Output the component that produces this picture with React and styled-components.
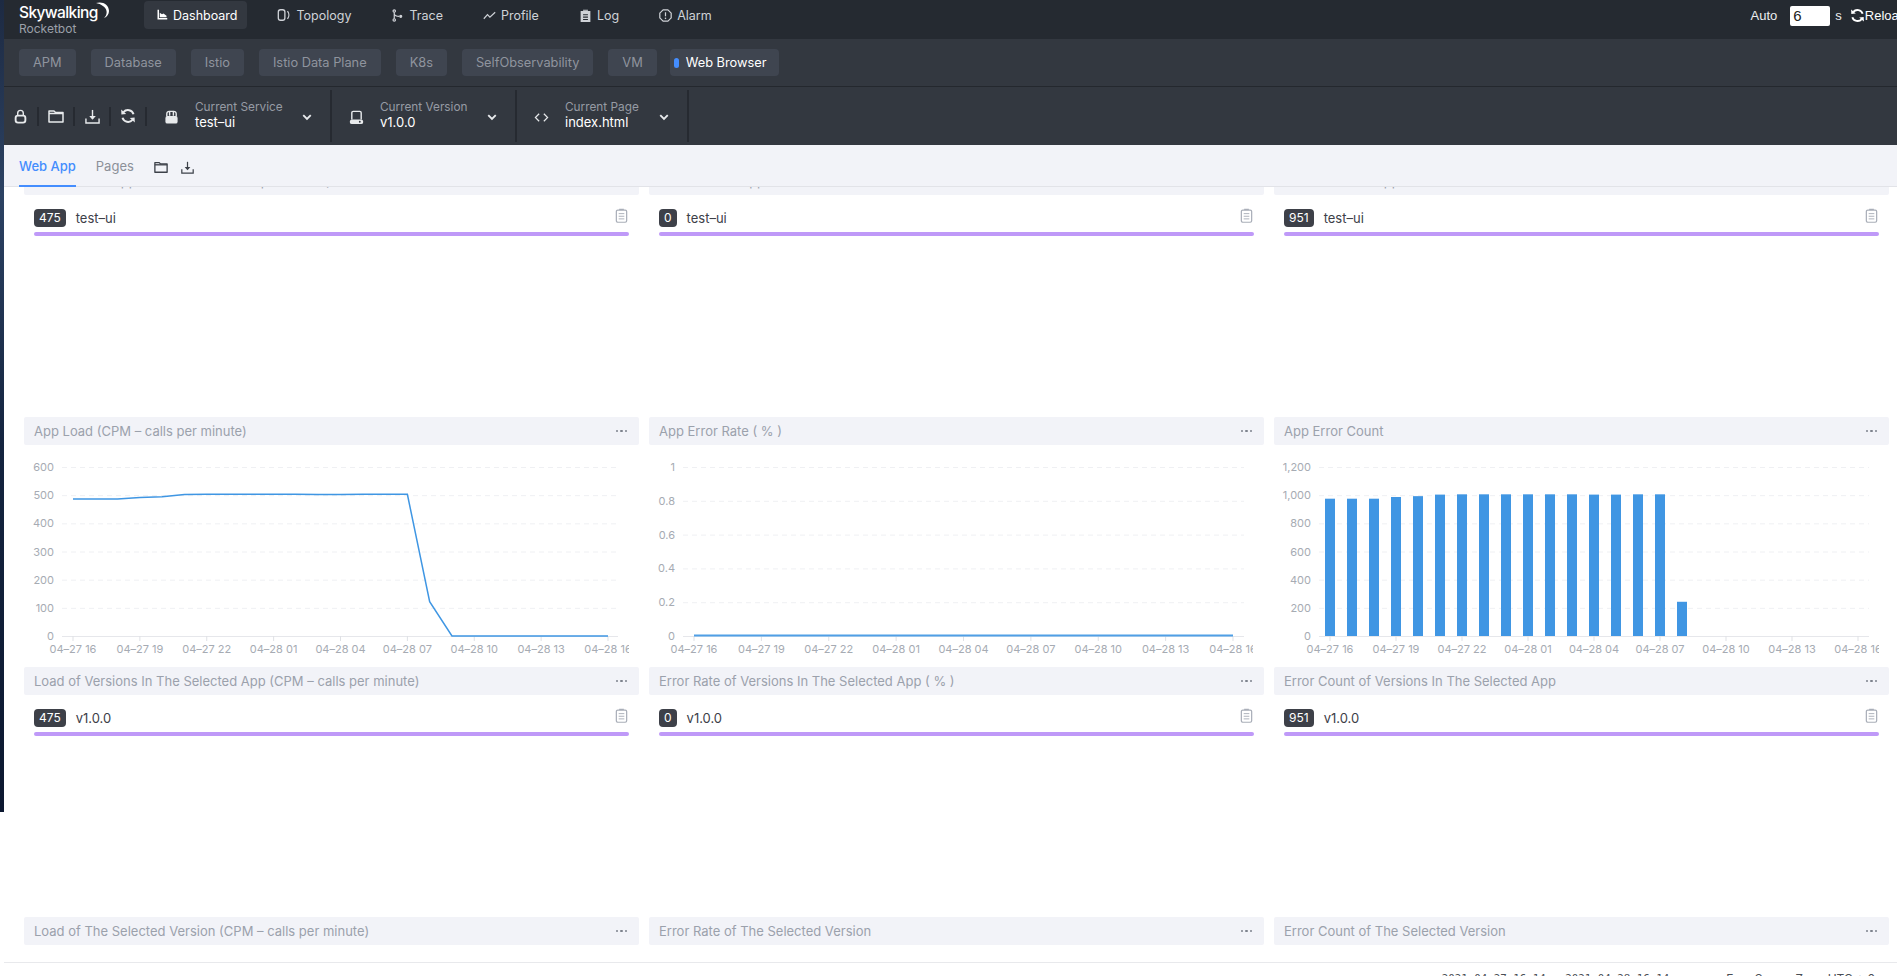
import React from "react";
import styled, { createGlobalStyle } from "styled-components";

const FONT = `Inter, "Noto Sans CJK SC", sans-serif`;

const GlobalStyle = createGlobalStyle`
  html, body {
    margin: 0;
    padding: 0;
    background: #fff;
    overflow: hidden;
  }
  body {
    font-family: ${FONT};
    font-size: 13px;
  }
  * {
    box-sizing: border-box;
  }
`;

const Ico = ({ children, size = 14, vb = "0 0 16 16" }) => (
  <svg width={size} height={size} viewBox={vb} fill="none" stroke="currentColor" strokeWidth="1.5">
    {children}
  </svg>
);

const DashIcon = () => (
  <Ico size={12}>
    <path d="M2 1v13h13v-2H4V1z" fill="currentColor" stroke="none" />
    <path d="M5 11V5l3 2 2-1 4 3v2z" fill="currentColor" stroke="none" />
  </Ico>
);
const TopoIcon = () => (
  <Ico size={14}>
    <rect x="1.5" y="2" width="7.5" height="12" rx="2.5" />
    <path d="M12 3.5c2 2.5 2 6.500 0 9" />
  </Ico>
);
const TraceIcon = () => (
  <Ico size={13}>
    <circle cx="4" cy="2.500" r="1.500" />
    <circle cx="4" cy="13.500" r="1.500" />
    <path d="M4 4v8M4 6c1 3 4 3 6 3" />
    <circle cx="12" cy="9" r="1.200" fill="currentColor" />
  </Ico>
);
const ProfileIcon = () => (
  <Ico size={13}>
    <path d="M1 12l4.500-5 3 3L15 4" />
  </Ico>
);
const LogIcon = () => (
  <Ico size={13}>
    <path d="M5 2h6v-1H5zM2 2.500h12V16H2z" fill="currentColor" stroke="none" />
    <path d="M5 7h6M5 10h6M5 13h6" stroke="#252a31" strokeWidth="1.300" />
  </Ico>
);
const AlarmIcon = () => (
  <Ico size={13}>
    <path d="M5 1h6l4 4v6l-4 4H5l-4-4V5z" strokeLinejoin="round" />
    <path d="M8 4v5" />
    <circle cx="8" cy="11.500" r="1" fill="currentColor" stroke="none" />
  </Ico>
);
const ReloadIcon = ({ size = 15 }) => (
  <Ico size={size}>
    <path d="M13.500 6.200A5.800 5.800 0 0 0 3.500 4.200" strokeWidth="2" />
    <path d="M2.500 9.800a5.800 5.800 0 0 0 10 2" strokeWidth="2" />
    <path d="M1.200 1.500l.2 5 4.800-.6zM14.800 14.500l-.2-5-4.800.6z" fill="currentColor" stroke="none" />
  </Ico>
);
const LockIcon = () => (
  <Ico size={15}>
    <path d="M5 7V4.500a3 3 0 0 1 6 0V7" />
    <rect x="2.800" y="7" width="10.400" height="7.500" rx="2.500" strokeWidth="2" />
  </Ico>
);
const FolderIcon = ({ size = 16 }) => (
  <Ico size={size}>
    <path d="M1 3h5l1.500 1.500H15V14H1z" strokeLinejoin="round" />
    <path d="M1 5.500h14" />
  </Ico>
);
const DownloadIcon = ({ size = 15 }) => (
  <Ico size={size}>
    <path d="M1 10v5h14v-5" />
    <path d="M8 1v9" />
    <path d="M4.500 7.500L8 11.500l3.500-4z" fill="currentColor" stroke="none" />
  </Ico>
);
const ServiceIcon = () => (
  <Ico size={15}>
    <path d="M3 7V4a2.500 2.500 0 0 1 2.500-2.500h5A2.500 2.500 0 0 1 13 4v3" />
    <rect x="1.500" y="6.500" width="13" height="8" rx="2" fill="currentColor" stroke="none" />
    <path d="M6 2v4M10 2v4" />
  </Ico>
);
const VersionIcon = () => (
  <Ico size={15}>
    <path d="M3 10V3a1.500 1.500 0 0 1 1.500-1.500h7A1.500 1.500 0 0 1 13 3v7" />
    <rect x="1" y="10" width="14" height="5" rx="2" fill="currentColor" stroke="none" />
    <circle cx="11.500" cy="12.500" r="1" fill="#333840" stroke="none" />
  </Ico>
);
const CodeIcon = () => (
  <Ico size={15}>
    <path d="M5.500 4L1.500 8l4 4M10.500 4l4 4-4 4" strokeWidth="1.300" />
  </Ico>
);
const ChevronIcon = () => (
  <Ico size={10}>
    <path d="M2 5l6 6 6-6" strokeWidth="3" />
  </Ico>
);
const ClipboardIcon = () => (
  <Ico size={15}>
    <rect x="2.500" y="2.200" width="11" height="13" rx="1.500" strokeWidth="1.300" />
    <path d="M5.500 2.200h5V.8h-5z" fill="currentColor" stroke="none" />
    <path d="M5 6h6M5 8.800h6M5 11.600h6" strokeWidth="1" />
  </Ico>
);

const Page = styled.div`
  display: flex;
  width: 1897px;
  height: 976px;
  overflow: hidden;
  background: #fff;
`;

const SideStrip = styled.div`
  flex: 0 0 4px;
  height: 812px;
  background: linear-gradient(#1d2a42, #2c4263 24%, #14243f 55%, #0c1830);
`;

const Main = styled.div`
  flex: 1;
  min-width: 0;
  height: 976px;
  display: flex;
  flex-direction: column;
`;

const TopNav = styled.header`
  flex: 0 0 39px;
  display: flex;
  background: #252a31;
  color: #d2d5da;
`;

const Logo = styled.div`
  flex: 0 0 140px;
  padding: 4px 0 0 15px;
  position: relative;
`;

const LogoName = styled.div`
  color: #fff;
  font-size: 15.500px;
  line-height: 18px;
  font-weight: 500;
  letter-spacing: -0.6px;
`;

const LogoSub = styled.div`
  color: #9ba0a9;
  font-size: 12px;
  line-height: 13px;
`;

const LogoMoon = styled.svg`
  position: absolute;
  left: 90px;
  top: 2px;
`;

const NavItems = styled.nav`
  display: flex;
  gap: 18px;
  align-items: flex-start;
  padding-top: 1px;
`;

const NavItem = styled.div`
  height: 28px;
  display: flex;
  align-items: center;
  gap: 5px;
  padding: 0 10px 0 12px;
  border-radius: 4px;
  font-size: 12.500px;
  color: ${(p) => (p.$active ? "#fff" : "#cfd2d7")};
  background: ${(p) => (p.$active ? "#333840" : "transparent")};
`;

const AutoBox = styled.div`
  margin-left: auto;
  margin-right: -9px;
  flex: 0 0 auto;
  display: flex;
  align-items: center;
  align-self: flex-start;
  height: 31px;
  color: #eceef0;
  font-family: "Liberation Sans", Arial, sans-serif;
  font-size: 13px;
`;

const AutoInput = styled.div`
  width: 40px;
  height: 20px;
  margin: 0 5px 0 13px;
  padding-left: 3px;
  border-radius: 2px;
  background: #fff;
  color: #222;
  font-size: 15px;
  line-height: 20px;
`;

const ReloadBtn = styled.div`
  display: flex;
  align-items: center;
  margin-left: 8px;
  color: #fff;
`;

const SubNav = styled.div`
  flex: 0 0 48px;
  display: flex;
  gap: 15px;
  padding: 10px 0 0 15px;
  background: #333840;
  border-bottom: 1px solid #24282e;
`;

const SubItem = styled.div`
  height: 27px;
  display: flex;
  align-items: center;
  gap: 7px;
  padding: ${(p) => (p.$active ? "0 12px 0 4px" : "0 14px")};
  margin-left: ${(p) => (p.$active ? "-2px" : "0")};
  border-radius: 4px;
  background: #3f4550;
  font-size: 12.800px;
  color: ${(p) => (p.$active ? "#fff" : "#8f949e")};
`;

const ActiveDot = styled.span`
  width: 5px;
  height: 10px;
  border-radius: 3px;
  background: #448dfe;
`;

const Toolbar = styled.div`
  flex: 0 0 58px;
  display: flex;
  align-items: stretch;
  background: #333840;
  padding-top: 3px;
`;

const ToolGroup = styled.div`
  display: flex;
  align-items: center;
  padding-bottom: 3px;
`;

const ToolBtn = styled.div`
  width: 36px;
  height: 19px;
  display: flex;
  align-items: center;
  justify-content: center;
  color: #e8eaec;
  border-right: 2px solid #262a31;
  &:first-child {
    width: 35px;
    padding-left: 0;
  }
`;

const Selector = styled.div`
  width: ${(p) => p.$w}px;
  display: flex;
  align-items: center;
  gap: 16px;
  padding: 0 18px 2px 17px;
  border-right: 2px solid #262a31;
  height: 52px;
  color: #e8eaec;
  svg {
    flex: none;
    margin-top: 4px;
  }
`;

const SelectorText = styled.div`
  flex: 1;
  min-width: 0;
  white-space: nowrap;
`;

const SelectorLabel = styled.div`
  color: #969ba4;
  font-size: 11.800px;
  line-height: 15px;
`;

const SelectorValue = styled.div`
  color: #fff;
  font-size: 13px;
  line-height: 15px;
`;

const TabBar = styled.div`
  flex: 0 0 42px;
  display: flex;
  align-items: stretch;
  padding-left: 15px;
  background: #f2f3f8;
  border-bottom: 1px solid #e2e3e8;
`;

const Tab = styled.div`
  display: flex;
  align-items: center;
  margin-right: 20px;
  padding-top: 2px;
  font-size: 13px;
  font-weight: ${(p) => (p.$active ? 500 : 400)};
  color: ${(p) => (p.$active ? "#448dfe" : "#8c9098")};
  border-bottom: 2px solid ${(p) => (p.$active ? "#448dfe" : "transparent")};
  margin-bottom: -1px;
`;

const TabTools = styled.div`
  display: flex;
  align-items: center;
  gap: 13px;
  color: #3d4149;
  padding-top: 3px;
`;

const Content = styled.main`
  flex: 1;
  min-height: 0;
  overflow: hidden;
`;

const Grid = styled.div`
  display: grid;
  grid-template-columns: repeat(3, 615px);
  grid-auto-rows: 250px;
  column-gap: 10px;
  margin-top: -20px;
  padding-left: 20px;
`;

const Card = styled.section`
  overflow: hidden;
`;

const CardHead = styled.div`
  height: 28px;
  display: flex;
  align-items: center;
  justify-content: space-between;
  padding: 0 10px;
  border-radius: 2px;
  background: #f2f3f8;
  color: #9ba1ac;
  font-size: 13px;
`;

const Dots = styled.span`
  display: flex;
  gap: 2px;
  margin-right: 2px;
  i {
    width: 2.500px;
    height: 2.500px;
    border-radius: 50%;
    background: #7d828c;
  }
`;

const ListBody = styled.div`
  padding: 14px 10px 0;
`;

const ListRow = styled.div`
  display: flex;
  align-items: center;
  height: 18px;
  color: #3d4048;
  font-size: 13px;
`;

const Badge = styled.span`
  height: 18px;
  padding: 0 5px;
  margin-right: 10px;
  border-radius: 4px;
  background: #3d4048;
  color: #fff;
  font-size: 12px;
  line-height: 18px;
`;

const CopyBtn = styled.span`
  margin-left: auto;
  margin-right: 0;
  display: flex;
  margin-top: -6px;
  color: #a9aeb8;
`;

const Bar = styled.div`
  height: 4px;
  margin-top: 5px;
  border-radius: 2px;
  background: #bf99f8;
`;

const ChartSvg = styled.svg`
  display: block;
`;

const AxisText = styled.text`
  fill: #a6abb3;
  font-family: ${FONT};
  font-size: 11px;
`;

const Footer = styled.footer`
  flex: 0 0 14px;
  display: flex;
  justify-content: flex-end;
  padding: 8px 22px 0 0;
  border-top: 1px solid #e8e9ec;
  overflow: hidden;
  color: #4a4e55;
  font-size: 12px;
  line-height: 15px;
`;

const FooterTime = styled.span`
  font-family: "DejaVu Sans Mono", "Liberation Mono", monospace;
  font-size: 10.800px;
  margin-right: 57px;
`;

const FooterZone = styled.span`
  margin-left: 14px;
`;

const TICKS = ["04–27 16", "04–27 19", "04–27 22", "04–28 01", "04–28 04", "04–28 07", "04–28 10", "04–28 13", "04–28 16"];

const Chart = ({ w, gridFrom, gridTo, tickFrom, tickTo, yLabels, labelX, children }) => {
  const top = 22;
  const base = 191;
  const step = (tickTo - tickFrom) / 8;
  return (
    <ChartSvg width={w} height={222}>
      {yLabels.map((l, i) => {
        const y = base - ((base - top) * i) / (yLabels.length - 1);
        return (
          <g key={l}>
            <AxisText x={labelX} y={y + 4} textAnchor="end">{l}</AxisText>
            {i > 0 && <line x1={gridFrom} x2={gridTo} y1={y + 0.5} y2={y + 0.5} stroke="#eff0f3" strokeDasharray="5 4" />}
          </g>
        );
      })}
      <line x1={gridFrom} x2={gridTo} y1={base + 0.5} y2={base + 0.5} stroke="#e6e7eb" />
      {TICKS.map((t, i) => {
        const x = tickFrom + step * i;
        return (
          <g key={t}>
            <line x1={x} x2={x} y1={base} y2={base + 5} stroke="#dfe1e5" />
            <AxisText x={x} y={base + 17} textAnchor="middle">{t}</AxisText>
          </g>
        );
      })}
      {children}
    </ChartSvg>
  );
};

const LOAD = [486, 486, 486, 492, 494, 502, 503, 503, 503, 503, 503, 502, 502, 503, 503, 503, 122, 0, 0, 0, 0, 0, 0, 0, 0];
const ERRORS = [975, 975, 975, 987, 993, 1004, 1006, 1006, 1006, 1006, 1006, 1006, 1004, 1004, 1006, 1006, 243];

const LoadChart = () => (
  <Chart w={605} gridFrom={38} gridTo={594} tickFrom={49} tickTo={584} labelX={30} yLabels={["0", "100", "200", "300", "400", "500", "600"]}>
    <polyline
      fill="none"
      stroke="#3f96e3"
      strokeWidth="1.500"
      points={LOAD.map((v, i) => `${49 + (535 / 24) * i},${191 - (v / 600) * 169}`).join(" ")}
    />
  </Chart>
);

const RateChart = () => (
  <Chart w={604} gridFrom={34} gridTo={595} tickFrom={45} tickTo={584} labelX={26} yLabels={["0", "0.2", "0.4", "0.6", "0.8", "1"]}>
    <line x1={45} x2={584} y1={190.500} y2={190.500} stroke="#4f9fe6" strokeWidth="2" />
  </Chart>
);

const CountChart = () => (
  <Chart w={605} gridFrom={45} gridTo={595} tickFrom={56} tickTo={584} labelX={37} yLabels={["0", "200", "400", "600", "800", "1,000", "1,200"]}>
    {ERRORS.map((v, i) => {
      const h = (v / 1200) * 169;
      return <rect key={i} x={51 + 22 * i} y={191 - h} width={10} height={h} fill="#4096e3" />;
    })}
  </Chart>
);

const ListCard = ({ title, value, name }) => (
  <Card>
    <CardHead>
      <span>{title}</span>
      <Dots><i /><i /><i /></Dots>
    </CardHead>
    <ListBody>
      <ListRow>
        <Badge>{value}</Badge>
        {name}
        <CopyBtn><ClipboardIcon /></CopyBtn>
      </ListRow>
      <Bar />
    </ListBody>
  </Card>
);

const ChartCard = ({ title, children }) => (
  <Card>
    <CardHead>
      <span>{title}</span>
      <Dots><i /><i /><i /></Dots>
    </CardHead>
    {children}
  </Card>
);

const NAV = [
  { label: "Dashboard", icon: <DashIcon />, active: true },
  { label: "Topology", icon: <TopoIcon /> },
  { label: "Trace", icon: <TraceIcon /> },
  { label: "Profile", icon: <ProfileIcon /> },
  { label: "Log", icon: <LogIcon /> },
  { label: "Alarm", icon: <AlarmIcon /> },
];

const GROUPS = ["APM", "Database", "Istio", "Istio Data Plane", "K8s", "SelfObservability", "VM"];

const SELECTORS = [
  { label: "Current Service", value: "test–ui", icon: <ServiceIcon />, w: 185 },
  { label: "Current Version", value: "v1.0.0", icon: <VersionIcon />, w: 185 },
  { label: "Current Page", value: "index.html", icon: <CodeIcon />, w: 172 },
];

export default function App() {
  return (
    <Page>
      <GlobalStyle />
      <SideStrip />
      <Main>
        <TopNav>
          <Logo>
            <LogoName>Skywalking</LogoName>
            <LogoSub>Rocketbot</LogoSub>
            <LogoMoon width="16" height="17" viewBox="0 0 16 17">
              <path d="M2 1c6-2 13 1 13 8 0 3-2 6-5 7 2-2 3-4 2.500-7C12 5 7 2 2 1z" fill="#fff" />
            </LogoMoon>
          </Logo>
          <NavItems>
            {NAV.map((n) => (
              <NavItem key={n.label} $active={n.active}>
                {n.icon}
                {n.label}
              </NavItem>
            ))}
          </NavItems>
          <AutoBox>
            Auto
            <AutoInput>6</AutoInput>
            s
            <ReloadBtn>
              <ReloadIcon />
              Reload
            </ReloadBtn>
          </AutoBox>
        </TopNav>

        <SubNav>
          {GROUPS.map((g) => (
            <SubItem key={g}>{g}</SubItem>
          ))}
          <SubItem $active>
            <ActiveDot />
            Web Browser
          </SubItem>
        </SubNav>

        <Toolbar>
          <ToolGroup>
            <ToolBtn><LockIcon /></ToolBtn>
            <ToolBtn><FolderIcon /></ToolBtn>
            <ToolBtn><DownloadIcon /></ToolBtn>
            <ToolBtn><ReloadIcon size={16} /></ToolBtn>
          </ToolGroup>
          {SELECTORS.map((s) => (
            <Selector key={s.label} $w={s.w}>
              {s.icon}
              <SelectorText>
                <SelectorLabel>{s.label}</SelectorLabel>
                <SelectorValue>{s.value}</SelectorValue>
              </SelectorText>
              <ChevronIcon />
            </Selector>
          ))}
        </Toolbar>

        <TabBar>
          <Tab $active>Web App</Tab>
          <Tab>Pages</Tab>
          <TabTools>
            <FolderIcon size={14} />
            <DownloadIcon size={13} />
          </TabTools>
        </TabBar>

        <Content>
          <Grid>
            <ListCard title="Load of The Apps In All (CPM – calls per minute)" value="475" name="test–ui" />
            <ListCard title="Error Rate of Apps ( % )" value="0" name="test–ui" />
            <ListCard title="Error Count of Apps" value="951" name="test–ui" />

            <ChartCard title="App Load (CPM – calls per minute)"><LoadChart /></ChartCard>
            <ChartCard title="App Error Rate ( % )"><RateChart /></ChartCard>
            <ChartCard title="App Error Count"><CountChart /></ChartCard>

            <ListCard title="Load of Versions In The Selected App (CPM – calls per minute)" value="475" name="v1.0.0" />
            <ListCard title="Error Rate of Versions In The Selected App ( % )" value="0" name="v1.0.0" />
            <ListCard title="Error Count of Versions In The Selected App" value="951" name="v1.0.0" />

            <ChartCard title="Load of The Selected Version (CPM – calls per minute)" />
            <ChartCard title="Error Rate of The Selected Version" />
            <ChartCard title="Error Count of The Selected Version" />
          </Grid>
        </Content>

        <Footer>
          <FooterTime>2021-04-27 16:14 ~ 2021-04-28 16:14</FooterTime>
          <span>En</span>
          <FooterZone>Server Zone UTC + 0</FooterZone>
        </Footer>
      </Main>
    </Page>
  );
}
